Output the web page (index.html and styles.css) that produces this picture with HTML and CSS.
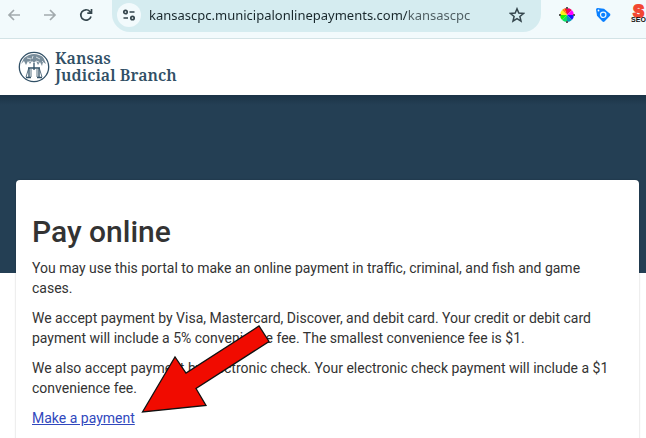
FILE: index.html
```html
<!DOCTYPE html>
<html lang="en">
<head>
<meta charset="utf-8">
<meta name="viewport" content="width=device-width, initial-scale=1">
<title>Pay online</title>
<link rel="stylesheet" href="styles.css">
</head>
<body>
<div class="toolbar">
  <div class="nav-buttons">
    <button class="icon-button disabled" aria-label="Back" disabled><svg width="14" height="14" viewBox="0 0 14 14"><path d="M13 7H2M7 2 2 7l5 5"/></svg></button>
    <button class="icon-button disabled" aria-label="Forward" disabled><svg width="14" height="14" viewBox="0 0 14 14"><path d="M1 7h11M7 2l5 5-5 5"/></svg></button>
    <button class="icon-button" aria-label="Reload"><svg width="14" height="14" viewBox="0 0 14 14"><path d="M12 8.500A5.200 5.200 0 1 1 10.900 3.500L12.500 5M12.500 1v4.200H8.300"/></svg></button>
  </div>
  <div class="address">
    <button class="site-info" aria-label="Site information"><svg width="14" height="14" viewBox="0 0 14 14"><circle cx="3.500" cy="4" r="1.700"/><path d="M7.500 4H12.500M1.500 10H6"/><circle cx="10.500" cy="10" r="1.700"/></svg></button>
    <input class="url" type="text" aria-label="Address" value="kansascpc.municipalonlinepayments.com/kansascpc">
    <button class="icon-button star" aria-label="Bookmark"><svg width="16" height="16" viewBox="0 0 16 16"><path d="m8 1.800 1.800 4.300 4.700.4-3.600 3 1.100 4.600L8 11.700l-4 2.400 1.100-4.600-3.600-3 4.700-.4z"/></svg></button>
  </div>
  <div class="extensions">
    <button class="icon-button" aria-label="Color picker"><svg class="solid" width="16" height="16" viewBox="0 0 16 16">
      <path fill="#ff1919" d="M8 8 5.300 1.500A7 7 0 0 1 8 1z"/><path fill="#f00064" d="M8 8V1a7 7 0 0 1 4.900 2.100z"/>
      <path fill="#f0f" d="M8 8l4.900-4.900A7 7 0 0 1 15 8z"/><path fill="#1616ff" d="M8 8h7a7 7 0 0 1-2.100 4.900z"/>
      <path fill="#0097b8" d="M8 8l4.900 4.900A7 7 0 0 1 8 15z"/><path fill="#08df62" d="M8 8v7a7 7 0 0 1-4.900-2.100z"/>
      <path fill="#20f000" d="M8 8l-4.900 4.900A7 7 0 0 1 1 8z"/><path fill="#ffee16" d="M8 8H1a7 7 0 0 1 2.100-4.900z"/><path fill="#ff8a00" d="M8 8 3.100 3.100a7 7 0 0 1 2.200-1.600z"/>
      <path fill="#555" d="M7 0h2v2H7zM7 14h2v2H7zM0 7h2v2H0zM14 7h2v2h-2z"/></svg></button>
    <button class="icon-button" aria-label="Shopping tag"><svg class="solid" width="16" height="16" viewBox="0 0 16 16"><path fill="#0a80ff" d="M1 2.500Q1 1 2.500 1L9 1.800l6 5q.8 1 0 2L9.500 14.500q-1 .8-2 0L2 8.800z"/><circle cx="8.200" cy="7.800" r="2.700" fill="none" stroke="#e5f6ff" stroke-width="1.200"/><circle cx="3.500" cy="3.500" r=".9" fill="#fff"/></svg></button>
    <button class="seo" aria-label="SEO extension"><span class="seo-letter">S</span><span class="seo-label">SEO</span></button>
  </div>
</div>

<header class="site-header">
  <a class="brand" href="#">
    <svg class="seal" width="32" height="32" viewBox="0 0 32 32" aria-hidden="true">
      <circle cx="16" cy="16" r="14.700" stroke-width="1.300"/>
      <path fill="#315066" fill-opacity=".65" stroke="none" d="M6 7q3-2 5-3 5-2 10 0 4 1 5 4l2 5-3-2-1 4-2-4-2 3-2-4-2 2-2-2-2 3-2-3-2 4-2-4-3 3z"/>
      <path stroke="#fff" stroke-width=".7" d="M9 7l4 1M15 5l-1 3M18 6l4 2M11 11l2-1M18 10l3 1M24 10l1 1"/>
      <path stroke-width="1.300" d="M16 12v7M10 17h12M11 17v10M21 17v10M8 26.500h5M19 26.500h5"/>
      <path stroke-width=".8" d="M10.500 18 8 26M21.500 18l2.500 8M13 18v8M19 18v8"/>
    </svg>
    <span class="brand-name">Kansas<br>Judicial Branch</span>
  </a>
</header>

<main class="page">
  <section class="card">
    <h1>Pay online</h1>
    <p>You may use this portal to make an online payment in traffic, criminal, and fish and game cases.</p>
    <p>We accept payment by Visa, Mastercard, Discover, and debit card. Your credit or debit card payment will include a 5% convenience fee. The smallest convenience fee is $1.</p>
    <p>We also accept payment by electronic check. Your electronic check payment will include a $1 convenience fee.</p>
    <p><a href="#">Make a payment</a></p>
    <svg class="pointer" width="130" height="90" viewBox="141 325 130 90" aria-hidden="true"><path d="m142.500 412 32.500-55 11 16 73-47 10 15.500-73 47 10 17z"/></svg>
  </section>
</main>
</body>
</html>
```
FILE: styles.css
```css
* { box-sizing: border-box; }

body {
  margin: 0;
  background: #fff;
  color: #333;
  font-family: Roboto, "Liberation Sans", sans-serif;
  font-size: 14px;
  line-height: 20px;
}

button {
  padding: 0;
  border: 0;
  background: none;
}

svg { display: block; }

.toolbar {
  display: flex;
  height: 39px;
  padding-bottom: 6px;
  border-bottom: 1px solid #d3e3e6;
  background: #f2fafc;
  overflow: hidden;
}

.nav-buttons {
  display: flex;
  align-items: center;
  gap: 20px;
  padding: 0 18px 2px 6px;
}

.icon-button {
  display: grid;
  place-items: center;
  flex: none;
  width: 16px;
  height: 16px;
}

.icon-button svg, .site-info svg {
  fill: none;
  stroke: #34454c;
  stroke-width: 1.700;
}

.disabled svg { stroke: #a2aaad; }

.address {
  display: flex;
  flex: 1;
  align-items: center;
  min-width: 0;
  padding: 0 16px 2px 5px;
  border-radius: 0 0 18px 18px;
  background: #d5ecf0;
}

.site-info {
  display: grid;
  place-items: center;
  flex: none;
  width: 24px;
  height: 24px;
  border-radius: 50%;
  background: #f2fafc;
}

.url {
  flex: 1;
  min-width: 0;
  margin-left: 8px;
  padding: 0;
  border: 0;
  background: linear-gradient(to right, #18272b 258px, #4d5c60 258px);
  background-clip: text;
  color: transparent;
  font: 13px/20px "Noto Sans", "Open Sans", sans-serif;
}

.star svg { stroke-width: 1.500; }

.icon-button .solid { stroke: none; }

.extensions {
  display: flex;
  align-items: center;
  gap: 20px;
  padding: 0 0 2px 18px;
}

.seo {
  display: grid;
  justify-items: center;
  width: 15px;
  font-family: "Liberation Sans", sans-serif;
  font-weight: 700;
}

.seo-letter {
  color: #f24732;
  font-size: 16px;
  line-height: 9px;
  -webkit-text-stroke: 2px #f24732;
}

.seo-label {
  z-index: 1;
  color: #111;
  font-size: 7px;
  line-height: 7px;
}

.site-header {
  display: flex;
  align-items: center;
  height: 56px;
  padding: 0 18px;
}

.brand {
  display: flex;
  align-items: center;
  gap: 5px;
  color: #315066;
  text-decoration: none;
}

.seal { fill: none; stroke: #315066; }

.brand-name {
  font-family: "Noto Serif", "Liberation Serif", serif;
  font-size: 16px;
  font-weight: 600;
  line-height: 17px;
}

.page {
  padding: 85px 7px 0 16px;
  background: linear-gradient(#1b3346 0, #243f54 10px, #243f54 178px, #fff 178px);
}

.card {
  position: relative;
  padding: 32px 16px 8px;
  border-radius: 4px;
  background: #fff;
  box-shadow: 0 0 2px rgba(0, 0, 0, 0.250);
}

h1 {
  margin: 0 0 6px;
  font-size: 30px;
  font-weight: 500;
  line-height: 40px;
}

p { margin: 0 0 10px; }

.card a { color: #3148bd; }

.pointer {
  position: absolute;
  top: 145px;
  left: 125px;
  fill: #f10b00;
  stroke: #111;
  stroke-width: 1.300;
}
```
